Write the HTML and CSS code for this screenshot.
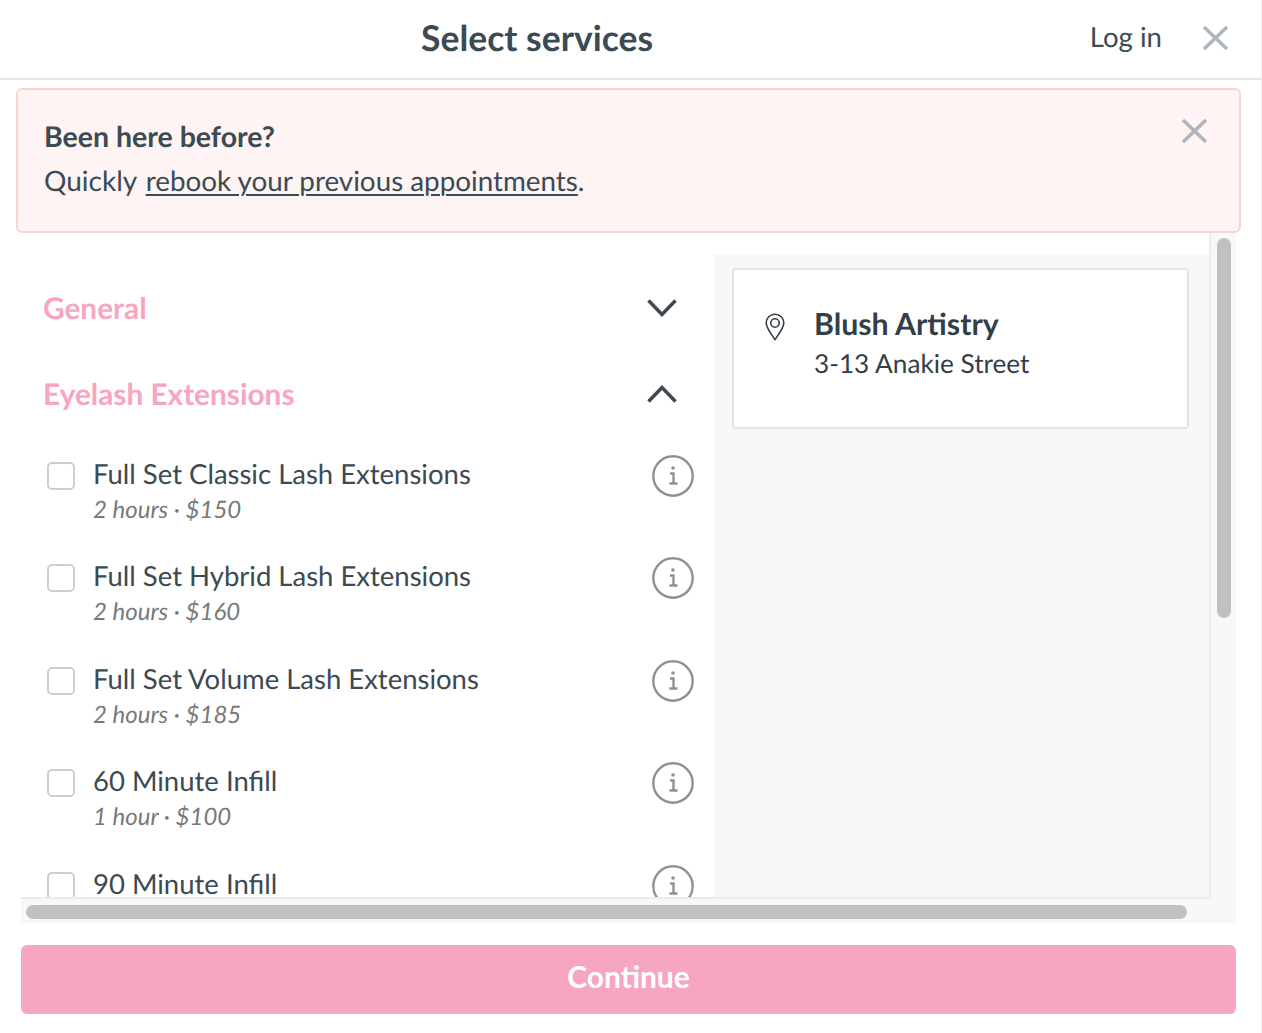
FILE: index.html
```html
<!DOCTYPE html>
<html lang="en">
<head>
<meta charset="utf-8">
<title>Select services</title>
<link rel="stylesheet" href="styles.css">
</head>
<body>
<div class="page">
  <header class="topbar">
    <h1 class="title">Select services</h1>
    <a class="login">Log in</a>
    <svg class="close-top" viewBox="0 0 25 24"><path d="M1 1l23 22M24 1L1 23"/></svg>
  </header>
  <div class="banner">
    <div>
      <p class="banner-head">Been here before?</p>
      <p class="banner-text">Quickly <a class="banner-link">rebook your previous appointments</a>.</p>
    </div>
    <svg class="close-banner" viewBox="0 0 25 24"><path d="M1 1l23 22M24 1L1 23"/></svg>
  </div>
  <div class="scroller">
    <div class="viewport">
      <main class="services">
        <div class="group group-first">
          <h2 class="group-name">General</h2>
          <svg class="chev" viewBox="0 0 30 18"><path d="M1.500 1.500L15 15.500 28.500 1.500"/></svg>
        </div>
        <div class="group group-second">
          <h2 class="group-name">Eyelash Extensions</h2>
          <svg class="chev" viewBox="0 0 30 18"><path d="M1.500 16.500L15 2.500 28.500 16.500"/></svg>
        </div>
        <div class="row">
          <span class="check"></span>
          <div class="row-body"><div class="row-name">Full Set Classic Lash Extensions</div><div class="row-meta">2 hours · $150</div></div>
          <svg class="info" viewBox="0 0 42 42"><circle cx="21" cy="21" r="19.700"/><circle class="dot" cx="21" cy="13" r="1.800"/><path d="M18 18.500h3.500v10M17.500 28.500h8"/></svg>
        </div>
        <div class="row">
          <span class="check"></span>
          <div class="row-body"><div class="row-name">Full Set Hybrid Lash Extensions</div><div class="row-meta">2 hours · $160</div></div>
          <svg class="info" viewBox="0 0 42 42"><circle cx="21" cy="21" r="19.700"/><circle class="dot" cx="21" cy="13" r="1.800"/><path d="M18 18.500h3.500v10M17.500 28.500h8"/></svg>
        </div>
        <div class="row">
          <span class="check"></span>
          <div class="row-body"><div class="row-name">Full Set Volume Lash Extensions</div><div class="row-meta">2 hours · $185</div></div>
          <svg class="info" viewBox="0 0 42 42"><circle cx="21" cy="21" r="19.700"/><circle class="dot" cx="21" cy="13" r="1.800"/><path d="M18 18.500h3.500v10M17.500 28.500h8"/></svg>
        </div>
        <div class="row">
          <span class="check"></span>
          <div class="row-body"><div class="row-name">60 Minute Infill</div><div class="row-meta">1 hour · $100</div></div>
          <svg class="info" viewBox="0 0 42 42"><circle cx="21" cy="21" r="19.700"/><circle class="dot" cx="21" cy="13" r="1.800"/><path d="M18 18.500h3.500v10M17.500 28.500h8"/></svg>
        </div>
        <div class="row">
          <span class="check"></span>
          <div class="row-body"><div class="row-name">90 Minute Infill</div></div>
          <svg class="info" viewBox="0 0 42 42"><circle cx="21" cy="21" r="19.700"/><circle class="dot" cx="21" cy="13" r="1.800"/><path d="M18 18.500h3.500v10M17.500 28.500h8"/></svg>
        </div>
      </main>
      <aside class="side">
        <div class="card">
          <svg class="pin" viewBox="0 0 20 28"><path d="M10 1.200C5 1.200 1.200 5 1.200 9.800c0 5 4.500 11 8.800 16.800 4.300-5.800 8.800-11.800 8.800-16.800C18.800 5 15 1.200 10 1.200z"/><circle cx="10" cy="10" r="4.200"/></svg>
          <div>
            <div class="card-name">Blush Artistry</div>
            <div class="card-addr">3-13 Anakie Street</div>
          </div>
        </div>
      </aside>
    </div>
    <div class="vtrack"><div class="vthumb"></div></div>
    <div class="htrack"><div class="hthumb"></div></div>
    <div class="corner"></div>
  </div>
  <div class="footer"><button class="continue">Continue</button></div>
</div>
</body>
</html>
```
FILE: styles.css
```css
* { box-sizing: border-box; }
html, body { margin: 0; padding: 0; height: 100%; background: #fff; }
body { font-family: Lato, "Open Sans", sans-serif; color: #3c4a54; overflow: hidden; text-rendering: geometricPrecision; }
p, h1, h2 { margin: 0; }
.page { width: 1262px; height: 1033px; border-right: 1px solid #eceff1; display: flex; flex-direction: column; }

.topbar { height: 80px; flex: none; display: flex; align-items: center; border-bottom: 2px solid #e3e7eb; padding: 0 33px 2px 421px; }
.title { font-size: 35.500px; font-weight: 700; line-height: 40px; flex: 1; color: #3c4a54; }
.login { font-size: 27.600px; line-height: 36px; margin: 0 41px 2px 0; color: #3c4a54; }
.close-top { width: 25px; height: 24px; flex: none; }
.close-top path, .close-banner path { fill: none; stroke: #aeb6bc; stroke-width: 3.500; }

.banner { flex: none; margin: 8px 20px 0 16px; height: 145px; padding: 26px 32px 0 26px; background: #fef4f3; border: 2px solid #fbd3cc; border-radius: 6px; display: flex; justify-content: space-between; }
.banner-head { font-size: 28.500px; font-weight: 700; line-height: 43px; }
.banner-text { font-size: 28px; line-height: 42px; }
.banner-link { font-size: 27.800px; margin-left: 2px; text-decoration: underline; text-decoration-thickness: 2px; text-underline-offset: 3px; }
.close-banner { width: 25px; height: 24px; flex: none; margin-top: 3px; }

.scroller { flex: none; margin-left: 21px; width: 1215px; height: 690px; display: grid; grid-template-columns: 1190px 25px; grid-template-rows: 666px 24px; background: #f8f8f8; border: solid #eeeeee; border-width: 0 2px 2px 0; }
.viewport { background: #fff; display: flex; overflow: hidden; border: solid #ececec; border-width: 0 2px 2px 0; }
.services { width: 693px; flex: none; padding: 0 18px 0 22px; }
.side { flex: 1; margin: 21px 0 0; background: #f8f8f8; padding: 14px 20px 0 18px; }
.card { height: 161px; background: #fff; border: 2px solid #e3e4e6; border-radius: 4px; display: flex; padding: 34px 0 0 31px; color: #333f48; }
.pin { width: 20px; height: 28px; flex: none; margin: 9px 29px 0 0; }
.pin path, .pin circle { fill: none; stroke: #333f48; stroke-width: 1.600; }
.card-name { font-size: 30.300px; font-weight: 700; line-height: 40px; }
.card-addr { font-size: 26.200px; line-height: 38px; }

.group { display: flex; justify-content: space-between; align-items: center; padding-right: 19px; }
.group-first { margin-top: 53px; height: 44px; }
.group-second { margin-top: 42px; height: 44px; margin-bottom: 37.500px; }
.group-name { font-size: 29.800px; font-weight: 700; color: #f8a5c0; line-height: 44px; padding-top: 2px; }
.chev { width: 30px; height: 18px; flex: none; }
.chev path { fill: none; stroke: #3c4a54; stroke-width: 3.500; }

.row { display: flex; height: 102.500px; align-items: flex-start; }
.check { width: 28px; height: 28px; flex: none; margin: 8px 18px 0 4px; background: #fff; border: 2px solid #ccd0d3; border-radius: 5px; }
.row-body { flex: 1; }
.row-name { font-size: 27.500px; line-height: 40px; color: #3c4a54; }
.row-meta { font-size: 24px; font-style: italic; line-height: 32px; color: #77797b; }
.info { width: 42px; height: 42px; flex: none; margin: 1px 2px 0 0; }
.info circle, .info path { fill: none; stroke: #8b9296; stroke-width: 2.400; }
.info .dot { fill: #8b9296; stroke: none; }

.vtrack { background: #f8f8f8; padding: 5px 5px 0 6px; }
.vthumb { height: 380px; background: #c1c1c1; border-radius: 7px; }
.htrack { background: #f8f8f8; padding: 6px 0 0 5px; }
.hthumb { width: 1161px; height: 14px; background: #c1c1c1; border-radius: 7px; }
.corner { background: #f8f8f8; }

.footer { flex: none; padding: 22px 0 0 21px; }
.continue { width: 1215px; height: 69px; display: block; border: none; border-radius: 6px; background: #f7a6c1; color: #fff; font-family: Lato, sans-serif; font-size: 30px; font-weight: 700; padding: 0 0 7px; }
```
